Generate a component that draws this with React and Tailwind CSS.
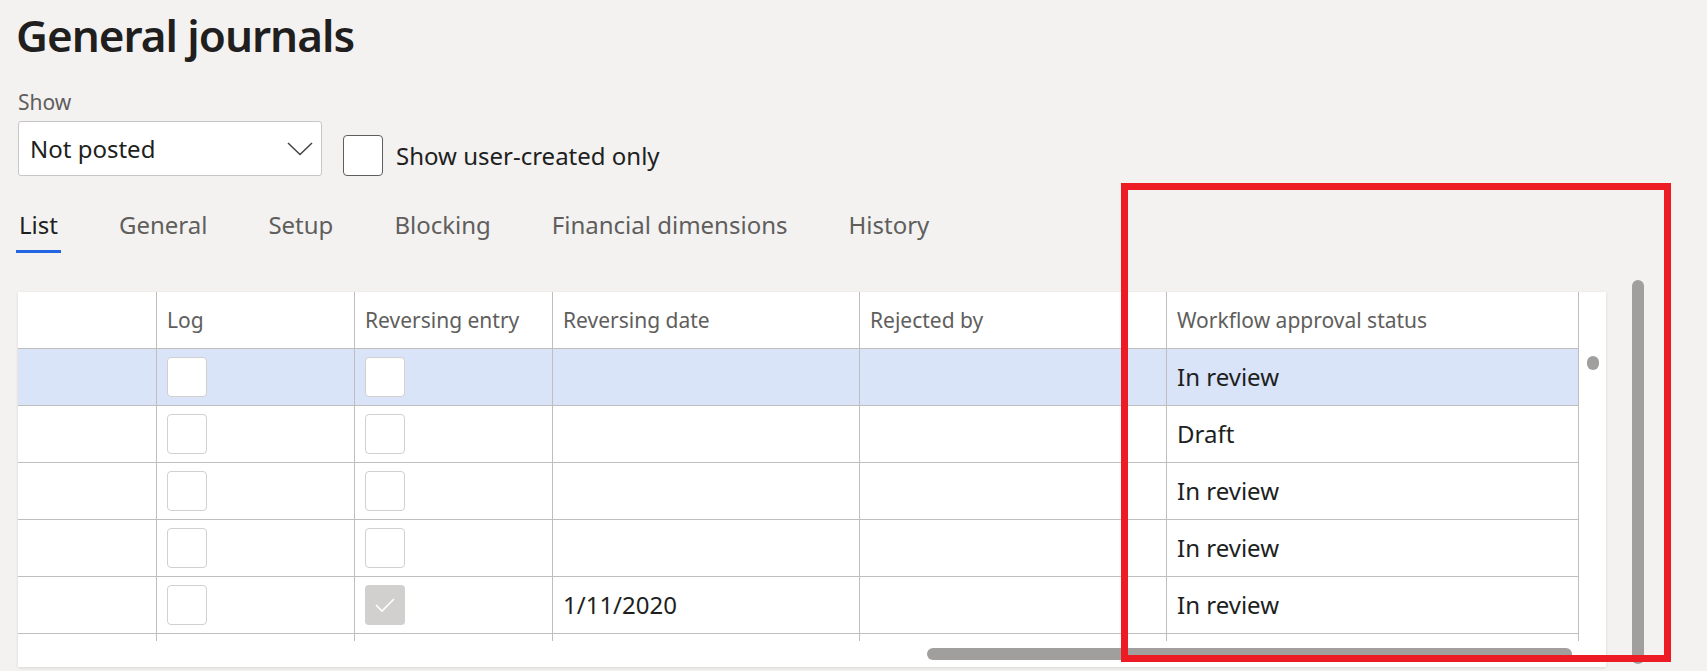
import React from 'react'

const cols = [
  { label: '', w: 'w-[138px]' },
  { label: 'Log', w: 'w-[198px]' },
  { label: 'Reversing entry', w: 'w-[198px]' },
  { label: 'Reversing date', w: 'w-[307px]' },
  { label: 'Rejected by', w: 'w-[307px]' },
  { label: 'Workflow approval status', w: 'w-[413px]' },
]

const rows = [
  { selected: true, reversing: false, date: '', status: 'In review' },
  { reversing: false, date: '', status: 'Draft' },
  { reversing: false, date: '', status: 'In review' },
  { reversing: false, date: '', status: 'In review' },
  { reversing: true, date: '1/11/2020', status: 'In review' },
  { empty: true },
]

const Box = ({ checked }) =>
  checked ? (
    <div className="w-[40px] h-[40px] rounded-[4px] bg-[#d2d0ce] flex items-center justify-center">
      <svg width="22" height="16" viewBox="0 0 22 16" fill="none">
        <polyline points="2,8 8,14 20,2" stroke="#ffffff" strokeWidth="1.6" />
      </svg>
    </div>
  ) : (
    <div className="w-[40px] h-[40px] rounded-[4px] bg-white border border-[#d2d0ce]" />
  )

const tabs = ['List', 'General', 'Setup', 'Blocking', 'Financial dimensions', 'History']

export default function App() {
  return (
    <div className="relative w-full h-[671px] overflow-hidden bg-[#f3f2f1] font-['Noto_Sans',sans-serif]">
      <h1 className="pl-[16px] pt-[7px] h-[62px] text-[44px] leading-[56px] font-semibold tracking-[-1px] text-[#201f1e]">
        General journals
      </h1>

      <div className="pl-[18px] mt-[26px] text-[21px] leading-[28px] text-[#605e5c]">Show</div>

      <div className="flex items-end pl-[18px] mt-[5px]">
        <div className="w-[304px] h-[55px] border border-[#c8c6c4] rounded-[3px] bg-white flex items-center justify-between pl-[11px] pr-[8px]">
          <span className="text-[24px] leading-[32px] text-[#201f1e]">Not posted</span>
          <svg width="26" height="14" viewBox="0 0 26 14" fill="none">
            <polyline points="1,1 13,12.5 25,1" stroke="#444240" strokeWidth="1.5" />
          </svg>
        </div>
        <div className="ml-[21px] w-[40px] h-[41px] rounded-[4px] border border-[#605e5c] bg-white" />
        <span className="ml-[13px] mb-[4px] text-[24px] leading-[32px] text-[#201f1e]">Show user-created only</span>
      </div>

      <div className="flex gap-[55px] pl-[16px] mt-[33px]">
        {tabs.map((t, i) => (
          <div key={t} className="flex flex-col">
            <span className={`px-[3px] text-[24px] leading-[32px] ${i === 0 ? 'text-[#201f1e]' : 'text-[#605e5c]'}`}>{t}</span>
            <div className={`mt-[9px] h-[3px] ${i === 0 ? 'bg-[#2266e3]' : 'bg-transparent'}`} />
          </div>
        ))}
      </div>

      <div className="flex pl-[18px] mt-[39px]">
        <div className="relative w-[1588px] h-[375px] bg-white shadow-[0_1px_3px_rgba(0,0,0,0.12)]">
          <div className="h-[349px] overflow-hidden">
            <div className="flex h-[57px] border-b border-[#c0bebc] w-[1561px]">
              {cols.map((c, i) => (
                <div
                  key={i}
                  className={`${c.w} flex items-center pl-[10px] text-[21px] leading-[28px] text-[#605e5c] ${i > 0 ? 'border-l border-[#c0bebc]' : ''} ${i === 5 ? 'border-r' : ''}`}
                >
                  {c.label}
                </div>
              ))}
            </div>
            {rows.map((r, ri) => (
              <div
                key={ri}
                className={`flex h-[57px] border-b border-[#c0bebc] w-[1561px] ${r.selected ? 'bg-[#d9e4f8]' : ''} ${r.empty ? 'border-b-0' : ''}`}
              >
                {cols.map((c, i) => (
                  <div
                    key={i}
                    className={`${c.w} flex items-center pl-[10px] text-[24px] leading-[32px] text-[#201f1e] ${i > 0 ? 'border-l border-[#c0bebc]' : ''} ${i === 5 ? 'border-r' : ''}`}
                  >
                    {!r.empty && i === 1 && <Box />}
                    {!r.empty && i === 2 && <Box checked={r.reversing} />}
                    {!r.empty && i === 3 && r.date}
                    {!r.empty && i === 5 && r.status}
                  </div>
                ))}
              </div>
            ))}
          </div>
          <div className="absolute left-[1569px] top-[64px] w-[12px] h-[14px] rounded-full bg-[#a19f9d]" />
          <div className="ml-[909px] mt-[7px] w-[645px] h-[12px] rounded-full bg-[#a19f9d]" />
        </div>
        <div className="ml-[26px] -mt-[12px] w-[12px] h-[384px] rounded-full bg-[#a19f9d]" />
      </div>

      <div className="absolute left-[1121px] top-[183px] w-[550px] h-[479px] border-[7px] border-[#ed1c24]" />
    </div>
  )
}
